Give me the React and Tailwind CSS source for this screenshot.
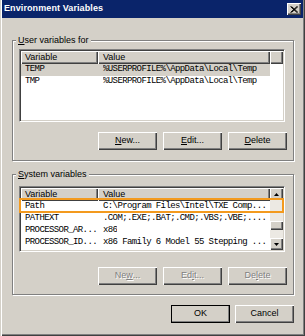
import React from 'react';

const ui = { fontFamily: '"Liberation Sans", Arial, sans-serif' };
const mono = { fontFamily: '"Liberation Mono", "Courier New", monospace' };

const raised =
  'bg-[#d4d0c8] shadow-[inset_1px_1px_0_#fff,inset_-1px_-1px_0_#404040,inset_-2px_-2px_0_#808080]';

// Access key letter, underlined
const Key = ({ children }) => <span className="underline underline-offset-[1px]">{children}</span>;

const Button = ({ children, disabled, isDefault }) => (
  <button
    type="button"
    className={`w-[59px] h-[18px] flex items-center justify-center text-[9px] ${raised} ${
      isDefault ? 'outline outline-1 outline-black -outline-offset-1' : ''
    } ${disabled ? 'text-[#808080] [text-shadow:1px_1px_0_#fff]' : 'text-black'}`}
    style={ui}
  >
    {children}
  </button>
);

const HeaderCell = ({ className = '', children }) => (
  <div
    className={`h-[13px] flex items-center text-[9px] text-black ${raised} ${className}`}
    style={ui}
  >
    {children}
  </div>
);

const Row = ({ name, value, selected }) => (
  <div
    className={`h-[12px] flex items-center text-[9px] tracking-[-0.6px] text-black w-[249px] ${
      selected ? 'bg-[#d4d0c8]' : ''
    }`}
    style={mono}
  >
    <span className="w-[82px] pl-[4px] whitespace-nowrap overflow-hidden">{name}</span>
    <span className="whitespace-nowrap overflow-hidden">{value}</span>
  </div>
);

const Header = () => (
  <div className="flex">
    <HeaderCell className="w-[77px] pl-[4px]">Variable</HeaderCell>
    <HeaderCell className="w-[172px] pl-[5px]">Value</HeaderCell>
    <HeaderCell className="flex-1" />
  </div>
);

const listBox =
  'w-[266px] bg-white border border-[#808080] border-r-white border-b-white shadow-[inset_1px_1px_0_#404040,inset_-1px_-1px_0_#d4d0c8] p-[1px]';

const Group = ({ label, children, className = '' }) => (
  <fieldset
    className={`border border-[#808080] shadow-[inset_1px_1px_0_#fff,1px_1px_0_#fff] ml-[10px] mr-[9px] pl-[6px] pr-[7px] ${className}`}
  >
    <legend className="ml-[-3px] px-[2px] bg-[#d4d0c8] text-[9px] leading-[12px] text-black" style={ui}>
      {label}
    </legend>
    {children}
  </fieldset>
);

export default function App() {
  return (
    <div
      className="w-[305px] h-[336px] bg-[#d4d0c8] flex flex-col px-[2px] pb-[2px] shadow-[inset_1px_0_0_#d4d0c8,inset_2px_0_0_#fff,inset_-1px_-1px_0_#404040,inset_-2px_-2px_0_#808080]"
      style={ui}
    >
      {/* Title bar */}
      <div className="h-[18px] bg-[#0a246a] flex items-center justify-between pl-[2px] pr-[2px]">
        <span className="text-white font-bold text-[9px] tracking-[0.1px]" style={ui}>
          Environment Variables
        </span>
        <div className={`w-[14px] h-[12px] flex items-center justify-center ${raised}`}>
          <svg width="8" height="7" viewBox="0 0 8 7">
            <path d="M0.5 0.5 L7 6.5 M1.5 0.5 L8 6.5 M7 0.5 L0.5 6.5 M8 0.5 L1.5 6.5" stroke="#000" strokeWidth="1" />
          </svg>
        </div>
      </div>

      {/* User variables */}
      <Group
        className="mt-[16px] pb-[10px]"
        label={
          <>
            <Key>U</Key>ser variables for
          </>
        }
      >
        <div className={`${listBox} h-[73px] mt-[3px]`}>
          <Header />
          <Row name="TEMP" value="%USERPROFILE%\AppData\Local\Temp" selected />
          <Row name="TMP" value="%USERPROFILE%\AppData\Local\Temp" />
        </div>
        <div className="flex justify-end gap-[6px] mt-[10px] mr-[-1px]">
          <Button>
            <Key>N</Key>ew...
          </Button>
          <Button>
            <Key>E</Key>dit...
          </Button>
          <Button>
            <Key>D</Key>elete
          </Button>
        </div>
      </Group>

      {/* System variables */}
      <Group
        className="mt-[7px] pb-[9px]"
        label={
          <>
            <Key>S</Key>ystem variables
          </>
        }
      >
        <div className={`${listBox} h-[66px] mt-[6px] relative flex`}>
          <div className="flex-1 flex flex-col">
            <div className="flex">
              <HeaderCell className="w-[77px] pl-[4px]">Variable</HeaderCell>
              <HeaderCell className="flex-1 pl-[5px]">Value</HeaderCell>
            </div>
            <Row name="Path" value="C:\Program Files\Intel\TXE Comp..." />
            <Row name="PATHEXT" value=".COM;.EXE;.BAT;.CMD;.VBS;.VBE;...." />
            <Row name="PROCESSOR_AR..." value="x86" />
            <Row name="PROCESSOR_ID..." value="x86 Family 6 Model 55 Stepping ..." />
          </div>
          {/* Scrollbar */}
          <div className="w-[13px] flex flex-col bg-[#ece9e3]">
            <div className={`h-[12px] flex items-center justify-center ${raised}`}>
              <svg width="5" height="3" viewBox="0 0 5 3">
                <path d="M2.5 0 L5 3 L0 3 Z" fill="#000" />
              </svg>
            </div>
            <div className="h-[21px]" />
            <div className={`h-[9px] ${raised}`} />
            <div className="flex-1" />
            <div className={`h-[12px] flex items-center justify-center ${raised}`}>
              <svg width="5" height="3" viewBox="0 0 5 3">
                <path d="M0 0 L5 0 L2.5 3 Z" fill="#000" />
              </svg>
            </div>
          </div>
          {/* Highlight on the Path row */}
          <div className="absolute left-[-1px] right-[0px] top-[11px] h-[15px] border-2 border-[#f39a1e] pointer-events-none" />
        </div>
        <div className="flex justify-end gap-[6px] mt-[15px] mr-[-1px]">
          <Button disabled>
            Ne<Key>w</Key>...
          </Button>
          <Button disabled>
            Ed<Key>i</Key>t...
          </Button>
          <Button disabled>
            De<Key>l</Key>ete
          </Button>
        </div>
      </Group>

      {/* Dialog buttons */}
      <div className="flex justify-end gap-[5px] mt-[10px] mr-[9px]">
        <Button isDefault>OK</Button>
        <Button>Cancel</Button>
      </div>
    </div>
  );
}
